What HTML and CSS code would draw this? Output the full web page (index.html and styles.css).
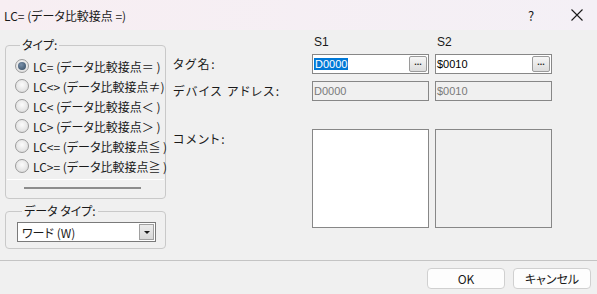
FILE: index.html
```html
<!DOCTYPE html>
<html lang="ja">
<head>
    <meta charset="UTF-8">
    <title>LC= (データ比較接点 =)</title>
    <link rel="stylesheet" href="styles.css">
</head>
<body>
    <div class="titlebar">
        <span class="title">LC= (データ比較接点 =)</span>
        <span class="help">?</span>
        <svg class="close" width="12" height="12" viewBox="0 0 12 12">
            <path d="M0.5 0.5 L11.5 11.5 M11.5 0.5 L0.5 11.5" stroke="#1a1a1a" stroke-width="1.1" fill="none"/>
        </svg>
    </div>

    <div class="main">
        <div class="left">
            <fieldset class="group type-group">
                <legend>タイプ:</legend>
                <label class="radio"><input type="radio" name="type" checked> LC= (データ比較接点＝ )</label>
                <label class="radio"><input type="radio" name="type"> LC&lt;&gt; (データ比較接点≠)</label>
                <label class="radio"><input type="radio" name="type"> LC&lt; (データ比較接点＜ )</label>
                <label class="radio"><input type="radio" name="type"> LC&gt; (データ比較接点＞ )</label>
                <label class="radio"><input type="radio" name="type"> LC&lt;= (データ比較接点≦ )</label>
                <label class="radio"><input type="radio" name="type"> LC&gt;= (データ比較接点≧ )</label>
                <div class="hline"></div>
                <div class="hbar"></div>
            </fieldset>

            <fieldset class="group data-group">
                <legend>データ タイプ:</legend>
                <div class="combo">
                    <span class="combo-text">ワード (W)</span>
                    <span class="combo-btn"><span class="tri"></span></span>
                </div>
            </fieldset>
        </div>

        <div class="form">
            <div></div>
            <div class="colhead">S1</div>
            <div class="colhead">S2</div>

            <div class="label">タグ名:</div>
            <div class="field"><span class="sel">D0000</span><span class="dots">...</span></div>
            <div class="field">$0010<span class="dots">...</span></div>

            <div class="label">デバイス アドレス:</div>
            <div class="field disabled">D0000</div>
            <div class="field disabled">$0010</div>

            <div class="label">コメント:</div>
            <div class="memo"></div>
            <div class="memo disabled"></div>
        </div>
    </div>

    <div class="footer">
        <button class="btn">OK</button>
        <button class="btn">キャンセル</button>
    </div>
</body>
</html>
```

FILE: styles.css
```css
body {
    margin: 0;
    width: 597px;
    height: 294px;
    overflow: hidden;
    background-color: #f0f0f0;
    font-family: "Noto Sans CJK JP", "Liberation Sans", sans-serif;
    font-size: 12px;
    font-feature-settings: "palt";
    color: #1a1a1a;
}

.titlebar {
    height: 30px;
    display: flex;
    align-items: center;
    padding-left: 4px;
    background: linear-gradient(to right, #f7eef2, #f4f0f6);
}

.title {
    flex: 1;
    font-size: 12px;
}

.help {
    font-size: 13px;
    width: 12px;
    margin-right: 31px;
}

.close {
    margin-right: 14px;
}

.main {
    height: 230px;
    display: grid;
    grid-template-columns: 161px 379px;
    column-gap: 7px;
    padding-left: 5px;
    box-sizing: border-box;
}

.left {
    padding-top: 7px;
    min-width: 0;
}

.group {
    margin: 0;
    padding: 0;
    border: 1px solid #c9c9c9;
    border-radius: 4px;
    min-width: 0;
}

.group legend {
    margin-left: 5px;
    padding: 0 2px;
    line-height: 16px;
    height: 16px;
}

.type-group {
    padding: 3px 0 9px 9px;
}

.radio {
    display: flex;
    align-items: center;
    height: 20px;
    gap: 4px;
    white-space: nowrap;
}

.radio input {
    appearance: none;
    margin: 0;
    width: 14px;
    height: 14px;
    border-radius: 50%;
    border: 1px solid #9c9c9c;
    background: radial-gradient(circle at 50% 40%, #fbfbfb 0, #e2e2e2 70%, #d2d2d2 100%);
    flex-shrink: 0;
    display: grid;
    place-items: center;
}

.radio input:checked::after {
    content: "";
    width: 8px;
    height: 8px;
    border-radius: 50%;
    background: radial-gradient(circle at 40% 35%, #7890aa, #33495f);
}

.hline {
    height: 1px;
    background: #ffffff;
    margin: 3px 1px 0 -8px;
}

.hbar {
    height: 2px;
    width: 117px;
    background: #8c8c8c;
    margin: 7px 0 0 9px;
}

.data-group {
    margin-top: 4px;
    padding: 3px 9px 6px 11px;
}

.combo {
    height: 20px;
    box-sizing: border-box;
    border: 1px solid #7a7a7a;
    background: #ffffff;
    display: flex;
    align-items: center;
    padding-left: 4px;
    padding-right: 1px;
}

.combo-text {
    flex: 1;
}

.combo-btn {
    width: 15px;
    height: 16px;
    box-sizing: border-box;
    border: 1px solid #a0a0a0;
    background: linear-gradient(#ececec, #d8d8d8);
    display: grid;
    place-items: center;
}

.tri {
    width: 0;
    height: 0;
    border-left: 3px solid transparent;
    border-right: 3px solid transparent;
    border-top: 3px solid #1a1a1a;
}

.form {
    display: grid;
    grid-template-columns: 133px 117px 117px;
    column-gap: 6px;
    grid-template-rows: 19px 27px 48px 99px;
    padding-top: 5px;
    align-items: start;
}

.colhead {
    padding-left: 2px;
    line-height: 14px;
    font-family: "Liberation Sans", sans-serif;
}

.label {
    line-height: 19px;
    white-space: nowrap;
    letter-spacing: 1.6px;
}

.field {
    height: 20px;
    box-sizing: border-box;
    border: 1px solid #878787;
    background: #ffffff;
    display: flex;
    align-items: center;
    padding-left: 1px;
    font-family: "Liberation Sans", sans-serif;
    font-size: 11px;
    color: #000000;
}

.field.disabled {
    background: #f0f0f0;
    color: #7a7a7a;
}

.sel {
    background: #0078d7;
    color: #ffffff;
    line-height: 12px;
    padding: 0 1px;
}

.dots {
    margin-left: auto;
    margin-right: 1px;
    width: 18px;
    height: 16px;
    box-sizing: border-box;
    border: 1px solid #9a9a9a;
    border-radius: 2px;
    background: linear-gradient(#f6f6f6, #dcdcdc);
    font-size: 9px;
    font-weight: bold;
    line-height: 10px;
    text-align: center;
    color: #222222;
}

.memo {
    height: 99px;
    box-sizing: border-box;
    border: 1px solid #878787;
    background: #ffffff;
}

.memo.disabled {
    background: #f0f0f0;
}

.footer {
    border-top: 1px solid #c4c4c4;
    height: 34px;
    display: flex;
    justify-content: flex-end;
    align-items: flex-start;
    gap: 8px;
    padding: 7px 6px 0 0;
    box-sizing: border-box;
}

.btn {
    width: 78px;
    height: 21px;
    border: 1px solid #d0d0d0;
    border-radius: 4px;
    background: #fdfdfd;
    font-family: "Noto Sans CJK JP", sans-serif;
    font-size: 12px;
    font-feature-settings: "palt";
    color: #1a1a1a;
    padding: 0;
}
```
